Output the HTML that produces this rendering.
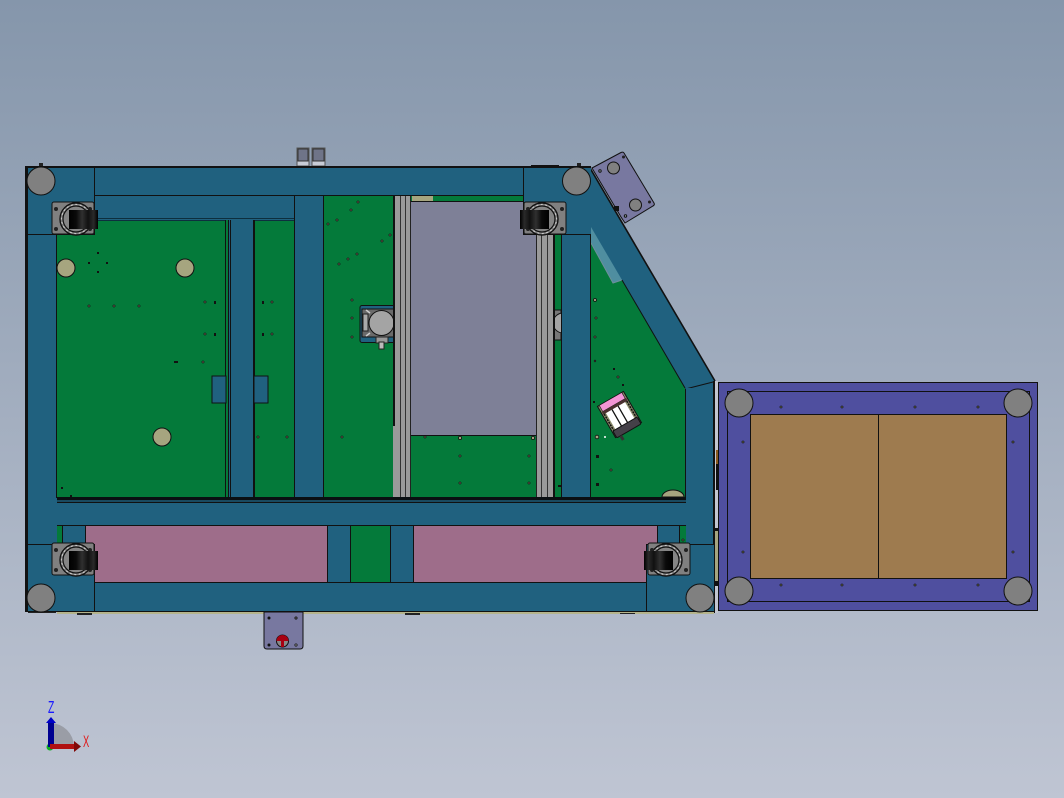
<!DOCTYPE html>
<html><head><meta charset="utf-8"><style>
html,body{margin:0;padding:0;width:1064px;height:798px;overflow:hidden;background:#a0abbd}
svg{display:block}
text{font-family:"Liberation Sans",sans-serif}
</style></head><body>
<svg width="1064" height="798" viewBox="0 0 1064 798" xmlns="http://www.w3.org/2000/svg">
<defs>
<linearGradient id="bg" x1="0" y1="0" x2="0" y2="1"><stop offset="0" stop-color="#8596ab"/><stop offset="1" stop-color="#bfc5d3"/></linearGradient>
<linearGradient id="wh2" x1="0" y1="0" x2="1" y2="0"><stop offset="0" stop-color="#000"/><stop offset=".25" stop-color="#0a0a0a"/><stop offset=".45" stop-color="#303030"/><stop offset=".66" stop-color="#111"/><stop offset=".85" stop-color="#2a2a2a"/><stop offset="1" stop-color="#000"/></linearGradient>
<g id="caster">
<rect x="52" y="202" width="42" height="32" rx="2" fill="#808080" stroke="#111" stroke-width="1"/>
<circle cx="76" cy="219" r="16" fill="#808080" stroke="#111" stroke-width="1.400"/>
<circle cx="76" cy="219" r="14.500" fill="none" stroke="#c8c8c8" stroke-width="1.200" stroke-dasharray="2 2.500"/>
<circle cx="76" cy="219" r="13" fill="#858585" stroke="#111" stroke-width="1.200"/>
<circle cx="56" cy="209" r="2" fill="#222"/><circle cx="90" cy="209" r="2" fill="#222"/>
<circle cx="56" cy="229" r="2" fill="#222"/><circle cx="90" cy="229" r="2" fill="#222"/>
<rect x="69" y="210" width="29" height="19" fill="url(#wh2)"/>
</g>
</defs>
<rect width="1064" height="798" fill="url(#bg)"/>

<g shape-rendering="crispEdges">
<!-- sensors top -->
<rect x="297" y="148" width="12" height="18" fill="#c8ccd6" stroke="#555"/>
<rect x="298" y="149" width="10" height="12" fill="#6f7488" stroke="#333"/>
<rect x="312" y="148" width="13" height="18" fill="#c8ccd6" stroke="#555"/>
<rect x="313" y="149" width="11" height="12" fill="#6f7488" stroke="#333"/>
<rect x="531" y="165" width="28" height="2" fill="#111"/>
<rect x="39" y="163" width="4" height="4" fill="#222"/>
<rect x="577" y="163" width="4" height="4" fill="#222"/>
</g>

<!-- frame base -->
<path d="M27 167H590L715 381V612H27Z" fill="#20617f"/>
<!-- green field -->
<path d="M57 196H591V243L613 283L622 280L685 388V497H57Z" fill="#047a3a"/>
<!-- diagonal lighter strip -->
<path d="M591 227L622 280L613 283L591 243Z" fill="#4f8ea0"/>
<path d="M591 243L613 283L622 280" fill="none" stroke="#6f8f9c" stroke-width="1"/>

<g shape-rendering="crispEdges">
<!-- upper bar and columns -->
<rect x="94" y="196" width="200" height="23" fill="#20617f"/>
<rect x="94" y="218" width="200" height="3" fill="#0d2f3e"/>
<rect x="94" y="219" width="200" height="1" fill="#20617f"/>
<rect x="225" y="220" width="29" height="277" fill="#20617f"/>
<rect x="225" y="220" width="1" height="277" fill="#111"/>
<rect x="226" y="220" width="2" height="277" fill="#047a3a"/>
<rect x="228" y="220" width="1" height="277" fill="#111"/>
<rect x="230" y="220" width="1" height="277" fill="#111"/>
<rect x="253" y="220" width="2" height="277" fill="#111"/>
<rect x="294" y="196" width="29" height="301" fill="#20617f"/>
<rect x="294" y="196" width="1" height="301" fill="#111"/>
<rect x="323" y="196" width="1" height="301" fill="#111"/>
<!-- tabs -->
<rect x="212" y="376" width="14" height="27" fill="#20617f" stroke="#111"/>
<rect x="254" y="376" width="14" height="27" fill="#20617f" stroke="#111"/>
<!-- top lines -->
<rect x="94" y="195" width="430" height="1" fill="#111"/>
<rect x="56" y="234" width="1" height="264" fill="#111"/>
<!-- tan strip -->
<rect x="412" y="196" width="21" height="6" fill="#a6a57f"/>
<!-- gray panel -->
<rect x="411" y="202" width="125" height="233" fill="#7e8097"/>
<rect x="411" y="201" width="125" height="1" fill="#111"/>
<rect x="411" y="435" width="125" height="1" fill="#111"/>
</g>

<!-- motors -->
<g>
<rect x="360" y="305.500" width="36" height="37" rx="2" fill="#20617f" stroke="#111"/>
<rect x="362" y="309" width="32" height="28" fill="#6a6a6a" stroke="#111"/>
<rect x="363" y="314" width="5" height="17" fill="#aaa" stroke="#222"/>
<path d="M366 310l4 3M366 336l4-3" stroke="#ccc" stroke-width="1.500"/>
<circle cx="381.500" cy="323" r="12.500" fill="#a4a4a4" stroke="#111"/>
<rect x="376" y="337" width="12" height="6" fill="#999" stroke="#222"/>
<rect x="379" y="342" width="5" height="7" fill="#bbb" stroke="#222"/>
<rect x="554" y="310" width="7" height="30" fill="#777"/>
<path d="M554 310h7v30h-7" fill="none" stroke="#111"/>
<circle cx="563" cy="323" r="10" fill="#a4a4a4" stroke="#111"/>
</g>

<g shape-rendering="crispEdges">
<rect x="561" y="234" width="29" height="263" fill="#20617f"/>
<rect x="561" y="234" width="1" height="263" fill="#111"/>
<rect x="590" y="196" width="1" height="301" fill="#111"/>
<!-- rails -->
<rect x="393" y="196" width="2" height="230" fill="#111"/>
<rect x="395" y="196" width="16" height="301" fill="#9a9a9a"/>
<rect x="393" y="426" width="2" height="71" fill="#9a9a9a"/>
<rect x="400" y="196" width="1" height="301" fill="#333"/>
<rect x="405" y="196" width="1" height="301" fill="#333"/>
<rect x="410" y="196" width="1" height="301" fill="#222"/>
<rect x="536" y="234" width="18" height="263" fill="#9a9a9a"/>
<rect x="536" y="234" width="1" height="263" fill="#222"/>
<rect x="541" y="234" width="1" height="263" fill="#333"/>
<rect x="547" y="234" width="1" height="263" fill="#333"/>
<rect x="553" y="234" width="2" height="263" fill="#111"/>
</g>

<!-- diagonal lines -->
<path d="M622 280L685 388" fill="none" stroke="#111" stroke-width="1"/>
<path d="M590 168L715 381" fill="none" stroke="#111" stroke-width="1.600"/>
<path d="M685.500 389L715 381.500" fill="none" stroke="#111"/>

<g shape-rendering="crispEdges">
<!-- lower structure -->
<rect x="686" y="388" width="29" height="224" fill="#20617f"/>
<rect x="685" y="389" width="1" height="156" fill="#111"/>
<rect x="57" y="497" width="629" height="3" fill="#0a0f12"/>
<rect x="57" y="500" width="629" height="2" fill="#1a4a60"/>
<rect x="57" y="502" width="629" height="23" fill="#20617f"/>
<rect x="57" y="502" width="629" height="1" fill="#111"/>
<rect x="57" y="525" width="629" height="57" fill="#20617f"/>
<rect x="57" y="525" width="629" height="1" fill="#111"/>
<rect x="57" y="526" width="6" height="18" fill="#047a3a"/>
<rect x="62" y="526" width="1" height="18" fill="#111"/>
<rect x="85.500" y="525.500" width="242" height="57" fill="#9e6d8a" stroke="#111"/>
<rect x="413.500" y="525.500" width="244" height="57" fill="#9e6d8a" stroke="#111"/>
<rect x="351" y="526" width="39" height="56" fill="#047a3a"/>
<rect x="350" y="526" width="1" height="56" fill="#111"/>
<rect x="390" y="526" width="1" height="56" fill="#111"/>
<rect x="680" y="526" width="6" height="18" fill="#047a3a"/>
<rect x="679" y="526" width="1" height="18" fill="#111"/>
<rect x="57" y="583" width="629" height="28" fill="#20617f"/>
<rect x="57" y="582" width="629" height="1" fill="#111"/>
<rect x="713" y="381" width="2" height="232" fill="#111"/>
<!-- corner blocks -->
<rect x="27" y="168" width="68" height="67" fill="#20617f"/>
<rect x="94" y="168" width="1" height="67" fill="#111"/>
<rect x="27" y="234" width="68" height="1" fill="#111"/>
<rect x="523" y="168" width="68" height="67" fill="#20617f"/>
<rect x="523" y="168" width="1" height="67" fill="#111"/>
<rect x="523" y="234" width="68" height="1" fill="#111"/>
<rect x="27" y="544" width="68" height="68" fill="#20617f"/>
<rect x="27" y="544" width="68" height="1" fill="#111"/>
<rect x="94" y="544" width="1" height="68" fill="#111"/>
<rect x="646" y="544" width="68" height="68" fill="#20617f"/>
<rect x="646" y="544" width="68" height="1" fill="#111"/>
<rect x="646" y="544" width="1" height="68" fill="#111"/>
<rect x="25" y="166" width="3" height="446" fill="#111"/>
<rect x="25" y="166" width="566" height="2" fill="#111"/>
<rect x="26" y="611" width="688" height="1" fill="#111"/>
<!-- bottom tan edge -->
<rect x="57" y="612" width="657" height="2" fill="#b5b48c"/>
<rect x="28" y="612" width="28" height="1" fill="#222"/>
<rect x="77" y="613" width="15" height="2" fill="#222"/>
<rect x="405" y="613" width="15" height="2" fill="#222"/>
<rect x="620" y="613" width="15" height="1" fill="#222"/>
</g>

<!-- tan circles -->
<g fill="#a6a57f" stroke="#111" stroke-width="1">
<circle cx="66" cy="268" r="9"/><circle cx="185" cy="268" r="9"/><circle cx="162" cy="437" r="9"/>
<path d="M662 497a11 7 0 0 1 22 0Z"/>
</g>

<!-- gray corner circles -->
<g fill="#808080" stroke="#111" stroke-width="1">
<circle cx="41" cy="181" r="14"/><circle cx="576.500" cy="181" r="14"/>
<circle cx="41" cy="598" r="14"/><circle cx="700" cy="598" r="14"/>
</g>

<!-- casters -->
<use href="#caster"/>
<use href="#caster" transform="translate(618 0) scale(-1 1)"/>
<use href="#caster" transform="translate(0 341)"/>
<use href="#caster" transform="translate(742 341) scale(-1 1)"/>

<!-- small holes -->
<g fill="#a6a57f" stroke="#111" stroke-width=".8">
<circle cx="89" cy="306" r="1"/><circle cx="114" cy="306" r="1"/><circle cx="139" cy="306" r="1"/>
<circle cx="205" cy="302" r="1"/><circle cx="272" cy="302" r="1"/><circle cx="205" cy="334" r="1"/><circle cx="272" cy="334" r="1"/>
<circle cx="203" cy="362" r="1"/><circle cx="258" cy="437" r="1"/><circle cx="287" cy="437" r="1"/><circle cx="342" cy="437" r="1"/>
<circle cx="358" cy="202" r="1"/><circle cx="351" cy="210" r="1"/><circle cx="337" cy="220" r="1"/><circle cx="328" cy="224" r="1"/>
<circle cx="382" cy="241" r="1"/><circle cx="390" cy="235" r="1"/><circle cx="357" cy="254" r="1"/><circle cx="348" cy="259" r="1"/><circle cx="339" cy="264" r="1"/>
<circle cx="352" cy="300" r="1"/><circle cx="352" cy="318" r="1"/><circle cx="352" cy="337" r="1"/>
<circle cx="595" cy="300" r="1.500"/><circle cx="596" cy="318" r="1"/><circle cx="595" cy="337" r="1"/><circle cx="595" cy="361" r=".8"/>
<circle cx="618" cy="377" r="1"/><circle cx="597" cy="437" r="1.800"/><circle cx="611" cy="470" r="1"/>
<circle cx="460" cy="438" r="1.600"/><circle cx="533" cy="438" r="1.600"/><circle cx="460" cy="456" r="1"/><circle cx="529" cy="456" r="1"/><circle cx="460" cy="483" r="1"/><circle cx="529" cy="483" r="1"/>
<circle cx="425" cy="437" r="1"/><circle cx="683" cy="540" r="1"/>
</g>
<g fill="#111" shape-rendering="crispEdges">
<rect x="97" y="252" width="2" height="2"/><rect x="88" y="262" width="2" height="2"/><rect x="106" y="262" width="2" height="2"/><rect x="97" y="271" width="2" height="2"/>
<rect x="214" y="301" width="2" height="3"/><rect x="262" y="301" width="2" height="3"/><rect x="214" y="333" width="2" height="3"/><rect x="262" y="333" width="2" height="3"/>
<rect x="174" y="361" width="4" height="2"/><rect x="61" y="487" width="2" height="2"/><rect x="70" y="495" width="2" height="2"/>
<rect x="613" y="368" width="2" height="2"/><rect x="622" y="384" width="2" height="2"/><rect x="593" y="401" width="2" height="2"/><rect x="596" y="455" width="3" height="3"/><rect x="596" y="483" width="3" height="3"/>
<rect x="427" y="435" width="14" height="1"/><rect x="558" y="485" width="3" height="2"/>
</g>

<!-- right panel strip -->
<g shape-rendering="crispEdges">
<rect x="715" y="381" width="3" height="232" fill="#c2c6d0"/>
<rect x="716" y="450" width="2" height="40" fill="#111"/>
<rect x="716" y="450" width="2" height="14" fill="#8a5a20"/>
<rect x="715" y="531" width="3" height="50" fill="#a6a57f"/>
<rect x="715" y="528" width="3" height="3" fill="#111"/>
<rect x="715" y="581" width="3" height="5" fill="#111"/>
<!-- right panel -->
<rect x="718.500" y="382.500" width="319" height="228" fill="#4f4f9f" stroke="#111"/>
<rect x="727.500" y="391.500" width="302" height="210" fill="#4f4f9f" stroke="#111"/>
<rect x="750.500" y="414.500" width="256" height="164" fill="#9e7b4f" stroke="#111"/>
<rect x="878" y="414" width="1" height="165" fill="#111"/>
</g>
<g fill="#808080" stroke="#111" stroke-width="1">
<circle cx="739" cy="403" r="14"/><circle cx="1018" cy="403" r="14"/>
<circle cx="739" cy="591" r="14"/><circle cx="1018" cy="591" r="14"/>
</g>
<g fill="#9e9e7f" stroke="#111" stroke-width=".8">
<circle cx="781" cy="407" r="1"/><circle cx="842" cy="407" r="1"/><circle cx="915" cy="407" r="1"/><circle cx="978" cy="407" r="1"/>
<circle cx="781" cy="585" r="1"/><circle cx="842" cy="585" r="1"/><circle cx="915" cy="585" r="1"/><circle cx="978" cy="585" r="1"/>
<circle cx="743" cy="442" r="1"/><circle cx="743" cy="552" r="1"/><circle cx="1013" cy="442" r="1"/><circle cx="1013" cy="552" r="1"/>
</g>

<!-- angled plate -->
<path d="M592 168L621 152.500Q623 151.500 624 153L654 203Q655 205 653 206L625 223L621 217L592 168Z" fill="#7878a0" stroke="#111" stroke-width="1"/>
<circle cx="613.500" cy="168" r="6" fill="#808080" stroke="#111"/>
<circle cx="635.500" cy="205" r="6" fill="#808080" stroke="#111"/>
<circle cx="600" cy="171" r="1.200" fill="#9aa" stroke="#111"/>
<circle cx="623.500" cy="157" r="1.500" fill="#222"/>
<circle cx="649.500" cy="202" r="1.500" fill="#222"/>
<circle cx="625.500" cy="216" r="1.200" fill="#9aa" stroke="#111"/>
<rect x="614" y="206" width="5" height="5" fill="#111"/>

<!-- bottom plate -->
<path d="M264 612H303V646Q303 649 300 649H267Q264 649 264 646Z" fill="#7878a0" stroke="#111" stroke-width="1"/>
<circle cx="269" cy="618" r="1.500" fill="#111"/><circle cx="296" cy="618" r="1.200" fill="#555" stroke="#111" stroke-width=".7"/>
<circle cx="269" cy="645" r="1.500" fill="#111"/><circle cx="296" cy="645" r="1.200" fill="#888" stroke="#111" stroke-width=".7"/>
<circle cx="282.500" cy="641" r="6" fill="#888" stroke="#111"/>
<path d="M276.500 641a6 6 0 0 1 12 0Z" fill="#a80012"/>
<rect x="281" y="641" width="3" height="6" fill="#a80012"/>

<!-- cylinder -->
<g transform="translate(619.500 414.500) rotate(-30)">
<rect x="-15" y="-18" width="30" height="36" fill="#8a8a6a" stroke="#111"/>
<rect x="-13" y="-18" width="26" height="7" fill="#f295d5" stroke="#111" stroke-width=".6"/>
<rect x="-14" y="-11" width="28" height="3" fill="#4a3030"/>
<rect x="-11" y="-8" width="22" height="19" fill="#fff"/>
<path d="M-4-8V11M3-8V11" stroke="#111" stroke-width="1.300"/>
<path d="M-13-8V11M13-8V11" stroke="#111" stroke-width="1.500" stroke-dasharray="2 1"/>
<rect x="-14" y="11" width="28" height="8" rx="1.500" fill="#444048" stroke="#111"/>
<rect x="-11" y="19" width="3" height="5" fill="#333"/>
</g>
<circle cx="605" cy="437" r="1" fill="#fff"/>

<!-- axes triad -->
<path d="M51 723A24 24 0 0 1 74 746H51Z" fill="#9a9da6"/>
<circle cx="50" cy="747" r="3.500" fill="#0fb020"/>
<rect x="48" y="722" width="6" height="25" fill="#000090" shape-rendering="crispEdges"/>
<path d="M46 723L51 717L56 723Z" fill="#0000c8"/>
<rect x="50" y="744" width="25" height="5" fill="#b01010" shape-rendering="crispEdges"/>
<path d="M74 741L81 746.500L74 752Z" fill="#800808"/>
<text transform="translate(48 713) scale(.58 1)" font-size="18" fill="#1a1aff">Z</text>
<text transform="translate(83 747) scale(.55 1)" font-size="17" fill="#e01818">X</text>
</svg>
</body></html>
